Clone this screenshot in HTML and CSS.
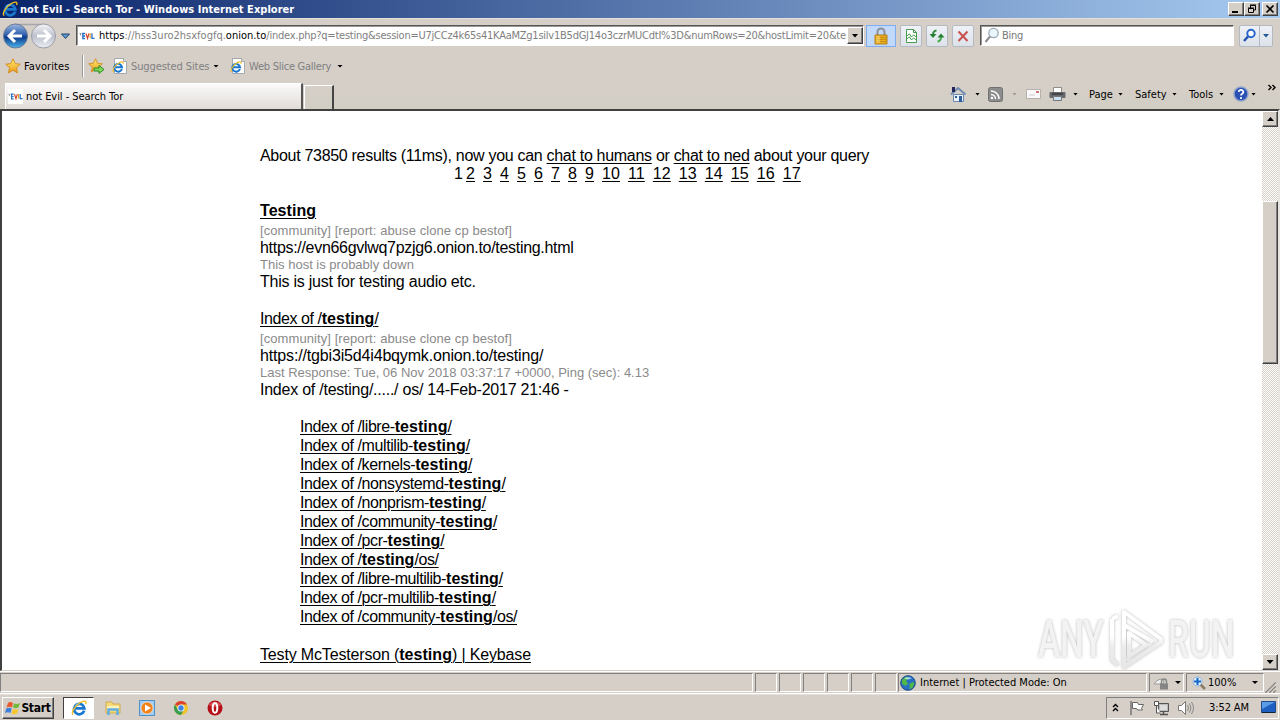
FILE: index.html
```html
<!DOCTYPE html>
<html lang="en">
<head>
  <meta charset="UTF-8" />
  <title>not Evil - Search Tor</title>
  <link rel="stylesheet" href="styles.css">
</head>
<body>
  <svg class="defs" width="0" height="0">
    <defs>
      <linearGradient id="blueBall" x1="0" y1="0" x2="0" y2="1">
        <stop offset="0" stop-color="#9db9e3"/><stop offset=".45" stop-color="#2f5fae"/><stop offset=".55" stop-color="#0b3a8c"/><stop offset="1" stop-color="#4cb5ee"/>
      </linearGradient>
      <linearGradient id="grayBall" x1="0" y1="0" x2="0" y2="1">
        <stop offset="0" stop-color="#f4f4f8"/><stop offset=".5" stop-color="#bcc0cc"/><stop offset="1" stop-color="#eceef4"/>
      </linearGradient>
      <linearGradient id="gold" x1="0" y1="0" x2="0" y2="1">
        <stop offset="0" stop-color="#fff27a"/><stop offset="1" stop-color="#ee9414"/>
      </linearGradient>
      <linearGradient id="fade" gradientUnits="userSpaceOnUse" x1="0" y1="0" x2="0" y2="64">
        <stop offset=".45" stop-color="#fff"/><stop offset=".6" stop-color="#ececec"/><stop offset="1" stop-color="#e6e6e6"/>
      </linearGradient>
      <symbol id="ie" viewBox="0 0 16 16">
        <path d="M13.2 10.6A5.2 5.2 0 1 1 13.4 8.4H4.6" fill="none" stroke="#1b78cf" stroke-width="2.7"/>
        <path d="M4.2 7.1A4.6 4.6 0 0 1 9 3.7" fill="none" stroke="#74cbf6" stroke-width="1.2"/>
        <path d="M2.2 14.6C-.4 12.8 3.6 6.2 8.6 3 12.4.5 16 .3 14.6 4" fill="none" stroke="#eebb22" stroke-width="1.4"/>
      </symbol>
      <symbol id="iepage" viewBox="0 0 16 16">
        <path d="M2.5.5h9l3 3v12h-12z" fill="#fff" stroke="#a5a8ad"/>
        <path d="M11.5.5v3h3" fill="#ddd" stroke="#a5a8ad"/>
        <use href="#ie" x="0" y="3" width="12" height="12"/>
      </symbol>
      <symbol id="star" viewBox="0 0 16 16">
        <path d="M8 .8l2.2 4.8 5.1.6-3.8 3.5 1 5.2L8 12.3l-4.5 2.6 1-5.2L.7 6.2l5.1-.6z" fill="url(#gold)" stroke="#d08a1c" stroke-width=".9"/>
      </symbol>
      <symbol id="evl" viewBox="0 0 16 16">
        <path d="M0 0h16v16H0z" fill="#fff"/>
        <path d="M.5 5.5h2M1.500 6v1.500" stroke="#999" fill="none"/>
        <path d="M6 5.500H3.800v5H6M4 8h2" fill="none" stroke="#2471c8" stroke-width="1.300"/>
        <path d="M7 5.500l1.500 5 1.500-5" fill="none" stroke="#d0402c" stroke-width="1.200"/>
        <path d="M11.200 5.300v5" stroke="#e8a72c" stroke-width="1.200"/>
        <path d="M13 5.300v5h2.600" fill="none" stroke="#2471c8" stroke-width="1.300"/>
      </symbol>
    </defs>
  </svg>

  <header class="titlebar">
    <svg class="ic16"><use href="#ie"/></svg>
    <span class="title">not Evil - Search Tor - Windows Internet Explorer</span>
    <div class="winbtns">
      <button class="raised"><svg width="12" height="10"><path d="M2 7h6v2H2z"/></svg></button>
      <button class="raised"><svg width="12" height="10"><path d="M4.500 4V1.500h5v4.500H8M4 1h6M2.500 4.500h5v4h-5zM2 4h6" fill="none" stroke="#000"/></svg></button>
      <button class="raised close"><svg width="12" height="10"><path d="M2.500 1.500l7 7M9.500 1.500l-7 7" stroke="#000" stroke-width="1.700"/></svg></button>
    </div>
  </header>

  <nav class="navbar">
    <svg class="travel" width="74" height="28" viewBox="0 0 74 28">
      <path d="M15 2.500h29" stroke="#a5a5ac" stroke-width="1.500"/>
      <circle cx="15.500" cy="14" r="12" fill="url(#blueBall)" stroke="#6c7994"/>
      <path d="M22 14H9.500M15 8l-6 6 6 6" fill="none" stroke="#fff" stroke-width="3"/>
      <circle cx="43.500" cy="14" r="12" fill="url(#grayBall)" stroke="#9b9ca6"/>
      <path d="M37 14h12.500M44 8l6 6-6 6" fill="none" stroke="#fff" stroke-width="3"/>
      <path d="M61.500 12h8l-4 4.500z" fill="#5b9bd0" stroke="#24456f"/>
    </svg>
    <div class="address">
      <svg class="ic16"><use href="#evl"/></svg>
      <span class="url"><b>https</b>://hss3uro2hsxfogfq.<b>onion.to</b><span class="query">/index.php?q=testing&amp;session=U7jCCz4k65s41KAaMZg1silv1B5dGJ14o3czrMUCdtI%3D&amp;numRows=20&amp;hostLimit=20&amp;te</span></span>
      <button class="raised drop"><i class="caret"></i></button>
    </div>
    <div class="lock"><svg width="16" height="18" viewBox="0 0 16 18"><path d="M4.500 8V5a3.500 3.500 0 0 1 7 0v3" fill="none" stroke="#8d8f93" stroke-width="2"/><path d="M2 8h12v9H2z" fill="#e9ad20" stroke="#b57e16"/><path d="M2.500 10.500h11M2.500 12.500h11M2.500 14.500h11" stroke="#c88b15"/><path d="M3 9h4v7H3z" fill="#ffe27a" opacity=".5"/></svg></div>
    <div class="tool"><svg width="16" height="16"><path d="M3.500 1.500h7l3 3v10h-10z" fill="#fff" stroke="#4c9a50"/><path d="M10.500 1.500v3h3M3.500 8l3-2 2 3 2-2 3 2M3.500 11l3-2 2 3 2-2 3 2" fill="none" stroke="#3c9b46"/></svg></div>
    <div class="tool"><svg width="18" height="16"><path d="M8.500 2.500Q5 3 5 7" fill="none" stroke="#348a3c" stroke-width="2"/><path d="M1.500 6h7L5 10z" fill="#267f30"/><path d="M9.500 13.500Q13 13 13 9" fill="none" stroke="#45a94c" stroke-width="2"/><path d="M9.500 9.500h7L13 5.500z" fill="#267f30"/></svg></div>
    <div class="tool"><svg width="16" height="16"><path d="M3.500 3.500l9 9.500M12.500 3.500l-9 9.500" stroke="#c9504e" stroke-width="2"/></svg></div>
    <div class="search">
      <svg width="17" height="17"><circle cx="9.500" cy="6" r="4.700" fill="#eaf5fc" stroke="#9aa8b2" stroke-width="1.300"/><path d="M6 9.500L1.500 15" stroke="#8b8b8b" stroke-width="2"/></svg>
      <span>Bing</span>
    </div>
    <div class="go">
      <div><svg width="15" height="15"><circle cx="9" cy="5.500" r="3.700" fill="#fff" stroke="#2866cc" stroke-width="2"/><path d="M6 8.500L2 13" stroke="#2456b0" stroke-width="2.500"/></svg></div>
      <div><svg width="6" height="4"><path d="M0 0h6L3 3.500z" fill="#23569d"/></svg></div>
    </div>
  </nav>

  <div class="favbar">
    <svg class="ic16"><use href="#star"/></svg>
    <span class="favs">Favorites</span>
    <i class="sep"></i>
    <svg class="addfav" width="17" height="16"><use href="#star" width="15" height="15"/><path d="M6 10h5V7.500l5 4-5 4V13H6z" fill="#7ed957" stroke="#2b8a2b"/></svg>
    <svg class="ic16"><use href="#iepage"/></svg>
    <span class="link sugg">Suggested Sites</span><i class="caret"></i>
    <svg class="ic16 slice"><use href="#iepage"/></svg>
    <span class="link gallery">Web Slice Gallery</span><i class="caret"></i>
  </div>

  <div class="tabrow">
    <div class="tab"><svg width="15" height="16"><use href="#evl" width="15" height="15"/></svg><span>not Evil - Search Tor</span></div>
    <div class="newtab"></div>
    <div class="cmdbar">
      <svg width="17" height="18"><path d="M3.500 9.500h10v7h-10z" fill="#e8f2fc" stroke="#6d8bb2"/><path d="M1 9.500L8 3l7.500 6.500" fill="none" stroke="#6d8bb2" stroke-width="2"/><path d="M2 2h3v5H2z" fill="#24245c"/><path d="M9 11h3v6H9z" fill="#315e9b"/><path d="M5 11h2v2H5z" fill="#315e9b"/></svg>
      <i class="caret"></i>
      <svg class="rss" width="15" height="15"><rect x=".5" y=".5" width="14" height="14" rx="2" fill="#8d8d8d" stroke="#707070"/><circle cx="4" cy="11" r="1.300" fill="#fff"/><path d="M3 7.500a4.500 4.500 0 0 1 4.500 4.500M3 4a8 8 0 0 1 8 8" fill="none" stroke="#fff" stroke-width="1.500"/></svg>
      <i class="caret off"></i>
      <svg class="mail" width="15" height="11"><path d="M.5.5h14v9H.5z" fill="#fafafa" stroke="#b5b0ac"/><path d="M10 2h3v2h-3z" fill="#cf7474"/><path d="M3 6h6" stroke="#ccc"/></svg>
      <svg class="print" width="17" height="16"><path d="M4.500 1.500h8v5h-8z" fill="#fff" stroke="#8c8c8c"/><rect x=".5" y="6" width="16" height="6" rx="1" fill="#65686d"/><path d="M3 8h11" stroke="#222"/><path d="M4.500 10.500h8v4h-8z" fill="#c8dff4" stroke="#777"/></svg>
      <i class="caret"></i>
      <span class="cmd page">Page</span><i class="caret"></i>
      <span class="cmd safety">Safety</span><i class="caret"></i>
      <span class="cmd tools">Tools</span><i class="caret"></i>
      <svg class="help" width="16" height="16"><circle cx="8" cy="8" r="7" fill="#2a50b4" stroke="#8fa4cb" stroke-width="1.500"/><path d="M5.700 6a2.300 2.100 0 1 1 3.500 1.700Q8 8.300 8 9.500M8 11v2" fill="none" stroke="#fff" stroke-width="1.700"/></svg>
      <i class="caret"></i>
      <svg class="more" width="9" height="8"><path d="M.5 1L3 3.500.5 6M4.500 1L7 3.500 4.500 6" fill="none" stroke="#000" stroke-width="1.400"/></svg>
    </div>
  </div>

  <div class="viewport">
    <main>
      <p class="stats">About 73850 results (11ms), now you can <a>chat to humans</a> or <a>chat to ned</a> about your query</p>
      <div class="pages"><span>1</span><a>2</a><a>3</a><a>4</a><a>5</a><a>6</a><a>7</a><a>8</a><a>9</a><a>10</a><a>11</a><a>12</a><a>13</a><a>14</a><a>15</a><a>16</a><a>17</a></div>

      <section>
        <h3><a><b>Testing</b></a></h3>
        <p class="meta">[community] [report: abuse clone cp bestof]</p>
        <p class="host1">https://evn66gvlwq7pzjg6.onion.to/testing.html</p>
        <p class="meta down">This host is probably down</p>
        <p class="desc1">This is just for testing audio etc.</p>
      </section>

      <section>
        <h3><a>Index of /<b>testing</b>/</a></h3>
        <p class="meta">[community] [report: abuse clone cp bestof]</p>
        <p class="host2">https://tgbi3i5d4i4bqymk.onion.to/testing/</p>
        <p class="meta down">Last Response: Tue, 06 Nov 2018 03:37:17 +0000, Ping (sec): 4.13</p>
        <p class="desc2">Index of /testing/...../ os/ 14-Feb-2017 21:46 -</p>
      </section>

      <ul>
        <li><a>Index of /libre-<b>testing</b>/</a></li>
        <li><a>Index of /multilib-<b>testing</b>/</a></li>
        <li><a>Index of /kernels-<b>testing</b>/</a></li>
        <li><a>Index of /nonsystemd-<b>testing</b>/</a></li>
        <li><a>Index of /nonprism-<b>testing</b>/</a></li>
        <li><a>Index of /community-<b>testing</b>/</a></li>
        <li><a>Index of /pcr-<b>testing</b>/</a></li>
        <li><a>Index of /<b>testing</b>/os/</a></li>
        <li><a>Index of /libre-multilib-<b>testing</b>/</a></li>
        <li><a>Index of /pcr-multilib-<b>testing</b>/</a></li>
        <li><a>Index of /community-<b>testing</b>/os/</a></li>
      </ul>

      <section>
        <h3 class="wide"><a>Testy McTesterson (<b>testing</b>) | Keybase</a></h3>
        <p class="meta">[community] [report: abuse clone cp bestof]</p>
      </section>
    </main>
    <div class="scrollbar">
      <button class="raised"><i class="caret up"></i></button>
      <div class="thumb raised"></div>
      <button class="raised end"><i class="caret"></i></button>
    </div>
    <div class="watermark">
      <span>ANY</span>
      <svg width="60" height="64" viewBox="0 0 60 64"><path d="M19 4v55l37-25v-3zM7 11v41l6 5M7 11l6-3M19 17l29 17M24 25v23l17-11z" fill="none" stroke="url(#fade)" stroke-width="4" stroke-linejoin="round"/></svg>
      <span>RUN</span>
    </div>
  </div>

  <div class="statusbar">
    <div class="pane msg"></div>
    <div class="pane sm"></div><div class="pane sm"></div><div class="pane sm"></div><div class="pane sm"></div><div class="pane sm"></div><div class="pane sm last"></div>
    <div class="pane zone">
      <svg width="16" height="16"><circle cx="8" cy="8" r="7.300" fill="#276fc4" stroke="#1b4b85"/><path d="M2 5l4-3.500L9 3 6 6l2 2-2 3-4-2zM9 9l4-2 1.500 1-2 5L9 14l1-3z" fill="#51b848"/><path d="M4 3.500q4-3 8 0l-4 1z" fill="#bfe8fa" opacity=".8"/></svg>
      <span>Internet | Protected Mode: On</span>
    </div>
    <div class="pane priv"><svg width="19" height="16"><path d="M1 9q5-7 10-4l-1 4z" fill="#eee" stroke="#9b9b9b"/><path d="M8.500 9V6.500a2.500 2.500 0 0 1 5 0V9" fill="none" stroke="#888" stroke-width="1.500"/><path d="M7 8.500h8v6H7z" fill="#858585"/></svg><i class="caret"></i></div>
    <div class="pane zoom"><svg width="14" height="14"><path d="M8 8l5 5" stroke="#8b7a61" stroke-width="2.500"/><circle cx="5.500" cy="5.500" r="4.500" fill="#e0f1ff" stroke="#8fb2d8"/><path d="M5.500 2v7M2 5.500h7" stroke="#1666c8" stroke-width="2"/></svg><span>100%</span><i class="caret"></i></div>
    <svg class="grip" width="12" height="12"><path d="M0 12L12 0M4 12l8-8M8 12l4-4" stroke="#fff" stroke-width="1"/><path d="M1 12L12 1M5 12l7-7M9 12l3-3" stroke="#88847e" stroke-width="1.500"/></svg>
  </div>

  <footer class="taskbar">
    <button class="raised start">
      <svg width="16" height="16"><path d="M3 3q2-2 5 0L7 7.500Q4 6 1.500 7.500z" fill="#e9592d"/><path d="M9 3.500q3 1 6-.5l-1.500 4.500q-3 1.500-5.500 0z" fill="#74b83c"/><path d="M1.200 8.500q3-1.500 5.500 0L5.500 13Q3 11.500 0 13z" fill="#3d7fdc"/><path d="M7.800 9q3 1 5.500 0L12 13.500q-3 1.500-5.500 0z" fill="#f8c52c"/></svg>
      <span>Start</span>
    </button>
    <div class="task active"><svg class="ic16"><use href="#ie"/></svg></div>
    <svg class="app" width="16" height="16"><path d="M1 2h6l1 2h7v9H1z" fill="#f5d978" stroke="#d0ab4c"/><path d="M2 6h12v3H2z" fill="#fdf3bd"/><path d="M3.500 15V9.500h9V15" fill="none" stroke="#61aee0" stroke-width="2.500"/></svg>
    <svg class="app" width="16" height="16"><path d="M.5.5h15v15H.5z" fill="#a5cdf0" stroke="#4b8fcb"/><circle cx="8" cy="8" r="6" fill="#f2831a" stroke="#fff" stroke-width=".5"/><path d="M6 4.500v7L12 8z" fill="#fff"/></svg>
    <svg class="app" width="16" height="16"><circle cx="8" cy="8" r="7" fill="#f2c22b"/><path d="M8 8L1.900 4.500A7 7 0 0 1 14.100 4.500H8z" fill="#d94432"/><path d="M1.900 4.500A7 7 0 0 0 8 15l3-5.200L5 9.800z" fill="#3c9c50"/><circle cx="8" cy="8" r="3.500" fill="#fff"/><circle cx="8" cy="8" r="2.700" fill="#3d82e3"/></svg>
    <svg class="app" width="16" height="16"><circle cx="8" cy="8" r="7.500" fill="#b50f17"/><path d="M1.500 5Q8-2 14.500 5 8 9 1.500 5z" fill="#e67878" opacity=".6"/><ellipse cx="8" cy="8" rx="2.300" ry="4.700" fill="none" stroke="#fff" stroke-width="2"/></svg>
    <div class="tray">
      <svg width="8" height="12"><path d="M1 5l2.500-2.500L6 5M1 9l2.500-2.500L6 9" fill="none" stroke="#000" stroke-width="1.400"/></svg>
      <svg class="flag" width="16" height="16"><path d="M2 1v14" stroke="#777" stroke-width="1.500"/><path d="M3.500 2.500h5l1 2h5l-2 4 1 1.500h-5l-1-1.500h-4z" fill="#fff" stroke="#666"/></svg>
      <svg class="net" width="17" height="16"><path d="M5.500 3.500h10v8h-10z" fill="#bbb" stroke="#555"/><path d="M7 5h7v5H7z" fill="#ddd"/><path d="M7 14.500h8M10.500 12v2" stroke="#555" stroke-width="1.500"/><path d="M1.500 1.500h4v4h-4zM3.500 6v7h4" fill="#fff" stroke="#555"/></svg>
      <svg class="vol" width="17" height="16"><path d="M1.500 5.500h3l4-4v13l-4-4h-3z" fill="#fff" stroke="#777"/><path d="M10.500 5q2 3 0 6M12.500 3.500q3 4.500 0 9M14.500 2q4 6 0 12" fill="none" stroke="#888"/></svg>
      <span class="clock">3:52 AM</span>
      <svg class="desk" width="15" height="13"><path d="M.5.500h14v11H.5z" fill="#1f5fc2" stroke="#204a8a"/><path d="M1 1h13L1 8z" fill="#5c9be6"/><path d="M1 11.500h13" stroke="#123"/></svg>
    </div>
  </footer>
</body>
</html>
```

FILE: styles.css
```css
* {
  box-sizing: border-box;
}
body {
  margin: 0;
  width: 1280px;
  height: 720px;
  overflow: hidden;
  display: flex;
  flex-direction: column;
  background: #d6cfc8;
  font-family: 'DejaVu Sans Condensed', 'DejaVu Sans', sans-serif;
  font-stretch: condensed;
  font-size: 11px;
  color: #000;
}

svg {
  display: block;
  flex: none;
}

span {
  white-space: nowrap;
}

.defs {
  position: absolute;
}

.ic16 {
  width: 16px;
  height: 16px;
}

button {
  padding: 0;
  display: flex;
  align-items: center;
  justify-content: center;
}

.raised {
  background: #d6cfc8;
  border: 1px solid;
  border-color: #fff #404040 #404040 #fff;
  box-shadow: inset -1px -1px 0 #808080;
}

.caret {
  flex: none;
  width: 6px;
  height: 3px;
  background: #000;
  clip-path: polygon(0 0, 100% 0, 50% 100%);
}
.caret.up {
  transform: rotate(180deg);
}
.caret.off {
  background: #999;
}

/* title bar */
.titlebar {
  height: 18px;
  flex: none;
  display: flex;
  align-items: center;
  padding: 0 2px;
  background: linear-gradient(to right, #0a246a, #a6caf0);
}
.title {
  margin-left: 2px;
  color: #fff;
  font-weight: bold;
  font-size: 11px;
  letter-spacing: 0.04px;
}
.winbtns {
  margin-left: auto;
  display: flex;
}
.winbtns button {
  width: 16px;
  height: 14px;
}
.winbtns .close {
  margin-left: 2px;
}

/* address row */
.navbar {
  height: 34px;
  flex: none;
  display: flex;
  align-items: center;
  border-top: 1px solid #e4e0dc;
}
.travel {
  margin-right: 2px;
}
.address, .search {
  height: 21px;
  display: flex;
  align-items: center;
  background: #fff;
  border: 1px solid;
  border-color: #555 #fff #fff #555;
  box-shadow: inset 1px 1px 0 #999;
}
.address {
  width: 788px;
  padding-left: 2px;
}
.url {
  width: 749px;
  margin-left: 4px;
  color: #808080;
}
.url b {
  font-weight: normal;
  color: #000;
}
.query {
  letter-spacing: -0.24px;
}
.drop {
  width: 16px;
  height: 17px;
}
.drop .caret, .scrollbar .caret {
  width: 7px;
  height: 4px;
}
.lock {
  margin: 0 4px 0 2px;
  width: 30px;
  height: 22px;
  display: flex;
  align-items: center;
  justify-content: center;
  background: #c1d9fb;
  border: 1px solid #7fabf0;
}
.tool, .go {
  height: 22px;
  background: linear-gradient(#eef1f6, #dde2ea);
  border: 1px solid #b4b9c2;
  border-radius: 2px;
}
.tool {
  width: 22px;
  margin-right: 4px;
  display: flex;
  align-items: center;
  justify-content: center;
}
.search {
  width: 254px;
  margin-left: 2px;
  padding-left: 3px;
  color: #777;
}
.search span {
  margin-left: 1px;
  letter-spacing: -0.3px;
}
.go {
  width: 34px;
  margin-left: 5px;
  display: flex;
}
.go div {
  display: flex;
  align-items: center;
  justify-content: center;
  width: 20px;
}
.go div + div {
  width: 13px;
  border-left: 1px solid #b4b9c2;
}

/* favorites */
.favbar {
  height: 28px;
  flex: none;
  display: flex;
  align-items: center;
  padding-left: 5px;
}
.favs {
  width: 47px;
  margin-left: 3px;
  letter-spacing: 0.1px;
}
.sep {
  width: 2px;
  height: 22px;
  margin: 0 4px 0 11px;
  border-left: 1px solid #999;
  border-right: 1px solid #fff;
}
.addfav {
  margin-right: 7px;
}
.link {
  margin-left: 3px;
  color: #808080;
}
.sugg {
  width: 79px;
  margin-right: 3px;
  letter-spacing: -0.1px;
}
.slice {
  margin-left: 11px;
}
.gallery {
  width: 84px;
  margin-right: 4px;
  letter-spacing: -0.25px;
}

/* tabs and command bar */
.tabrow {
  height: 29px;
  flex: none;
  display: flex;
  align-items: flex-end;
  padding-left: 5px;
  background: linear-gradient(#d6cfc8, #d2cec4);
}
.tab {
  width: 298px;
  height: 26px;
  display: flex;
  align-items: center;
  padding-left: 2px;
  background: linear-gradient(#fbfafa, #e0dbd6);
  border: 1px solid #fff;
  border-right: 2px solid #555;
  border-bottom: 0;
}
.tab span {
  margin-left: 3px;
  letter-spacing: -0.05px;
}
.newtab {
  width: 30px;
  height: 24px;
  margin-left: 1px;
  border-top: 1px solid #fff;
  border-left: 1px solid #fff;
  border-right: 2px solid #444;
}
.cmdbar {
  margin-left: 616px;
  height: 30px;
  display: flex;
  align-items: center;
}
.cmdbar > .caret {
  width: 5px;
  margin-left: 8px;
}
.cmdbar .rss { margin-left: 8px; }
.cmdbar .caret.off { margin-left: 9px; }
.cmdbar .mail { margin-left: 9px; }
.cmdbar .print { margin-left: 8px; }
.cmdbar .print + .caret { margin-left: 7px; }
.cmdbar .cmd + .caret { margin-left: 4px; }
.page { width: 25px; margin-left: 11px; }
.safety { width: 33px; margin-left: 12px; }
.tools { width: 26px; margin-left: 12px; }
.help { margin-left: 9px; }
.cmdbar .help + .caret { margin-left: 2px; }
.more {
  margin: 0 0 12px 12px;
}

/* page */
.viewport {
  position: relative;
  height: 562px;
  flex: none;
  display: flex;
  justify-content: space-between;
  background: #fff;
  border: solid;
  border-width: 2px 2px 1px 2px;
  border-color: #404040 #e8e4e0 #d6cfc8 #404040;
  overflow: hidden;
}
main {
  width: 740px;
  margin: 36px 0 0 258px;
  font-family: 'Liberation Sans', Arial, sans-serif;
  font-size: 16px;
  line-height: 17px;
  white-space: nowrap;
}
main p, main h3, main ul {
  margin: 0;
  padding: 0;
  font-weight: normal;
}
main a {
  text-decoration: underline;
  text-underline-offset: 2px;
  text-decoration-thickness: 1px;
}
main .stats, .pages {
  line-height: 18px;
}
.stats, .host1 {
  letter-spacing: -0.3px;
}
.host2 {
  letter-spacing: -0.16px;
}
.desc1, .desc2 {
  letter-spacing: -0.24px;
}
.pages {
  display: flex;
  gap: 8px;
  padding-left: 194px;
  letter-spacing: 0.1px;
}
.pages span {
  margin-right: -5px;
}
main section, main ul {
  margin-top: 19px;
}
.pages + section {
  margin-top: 18px;
}
main h3 {
  font-size: 16px;
  line-height: 19px;
  margin-bottom: 2px;
}
main h3, main li {
  letter-spacing: -0.42px;
}
main h3.wide {
  letter-spacing: -0.16px;
}
main b {
  letter-spacing: 0.05px;
}
main .meta {
  font-size: 13px;
  color: #8a8a8a;
  letter-spacing: 0.08px;
}
main .down {
  letter-spacing: 0;
}
main ul {
  padding-left: 40px;
  list-style: none;
}
main li {
  line-height: 19px;
}

.scrollbar {
  width: 16px;
  display: flex;
  flex-direction: column;
  background: repeating-conic-gradient(#fff 0 25%, #d6cfc8 0 50%) 0 0 / 2px 2px;
}
.scrollbar button {
  width: 16px;
  height: 16px;
}
.thumb {
  margin-top: 74px;
  height: 163px;
}
.scrollbar .end {
  margin-top: auto;
}

.watermark {
  position: absolute;
  left: 1036px;
  top: 497px;
  display: flex;
  align-items: center;
  gap: 3px;
  font-family: Roboto, sans-serif;
  font-weight: 500;
  font-size: 52px;
  font-stretch: normal;
  filter: drop-shadow(0 0 1.5px rgba(0, 0, 0, 0.28));
}
.watermark span {
  width: 64px;
  line-height: 64px;
  transform: scaleX(0.64);
  transform-origin: left;
  color: #f3f3f3;
}

/* status bar */
.statusbar {
  height: 23px;
  flex: none;
  display: flex;
  align-items: center;
  border-top: 1px solid #fff;
  border-bottom: 1px solid #fff;
}
.pane {
  height: 19px;
  display: flex;
  align-items: center;
  border: 1px solid;
  border-color: #808080 #fff #fff #808080;
}
.msg { width: 753px; margin-right: 2px; }
.sm { width: 22px; margin-right: 2px; }
.sm.last { margin-right: 0; }
.zone { width: 249px; padding-left: 1px; margin: 0 2px 0 1px; }
.zone span { margin-left: 4px; }
.priv { width: 35px; padding-left: 3px; margin-right: 2px; }
.priv .caret { margin-left: 3px; }
.zoom { width: 78px; padding-left: 5px; }
.zoom span { width: 30px; margin: 0 14px 0 2px; }
.grip {
  margin-top: 8px;
}

/* taskbar */
.taskbar {
  height: 26px;
  flex: none;
  display: flex;
  align-items: center;
  padding-left: 2px;
  border-top: 1px solid #e4e0dc;
}
.start {
  width: 52px;
  height: 22px;
  font-family: inherit;
  font-size: 12px;
  font-weight: bold;
}
.start span {
  letter-spacing: -0.3px;
}
.task.active {
  width: 31px;
  height: 22px;
  margin: 0 10px 0 9px;
  display: flex;
  align-items: center;
  justify-content: center;
  background: #fff;
  border: 1px solid;
  border-color: #404040 #fff #fff #404040;
}
.app {
  margin: 0 17px 0 1px;
}
.tray {
  width: 173px;
  height: 22px;
  margin-left: auto;
  margin-right: 1px;
  padding-left: 5px;
  display: flex;
  align-items: center;
  border: 1px solid;
  border-color: #808080 #fff #fff #808080;
}
.flag { margin-left: 9px; }
.net { margin-left: 8px; }
.vol { margin-left: 7px; }
.clock { width: 41px; margin-left: 15px; letter-spacing: -0.1px; }
.desk { margin-left: 11px; }
```
